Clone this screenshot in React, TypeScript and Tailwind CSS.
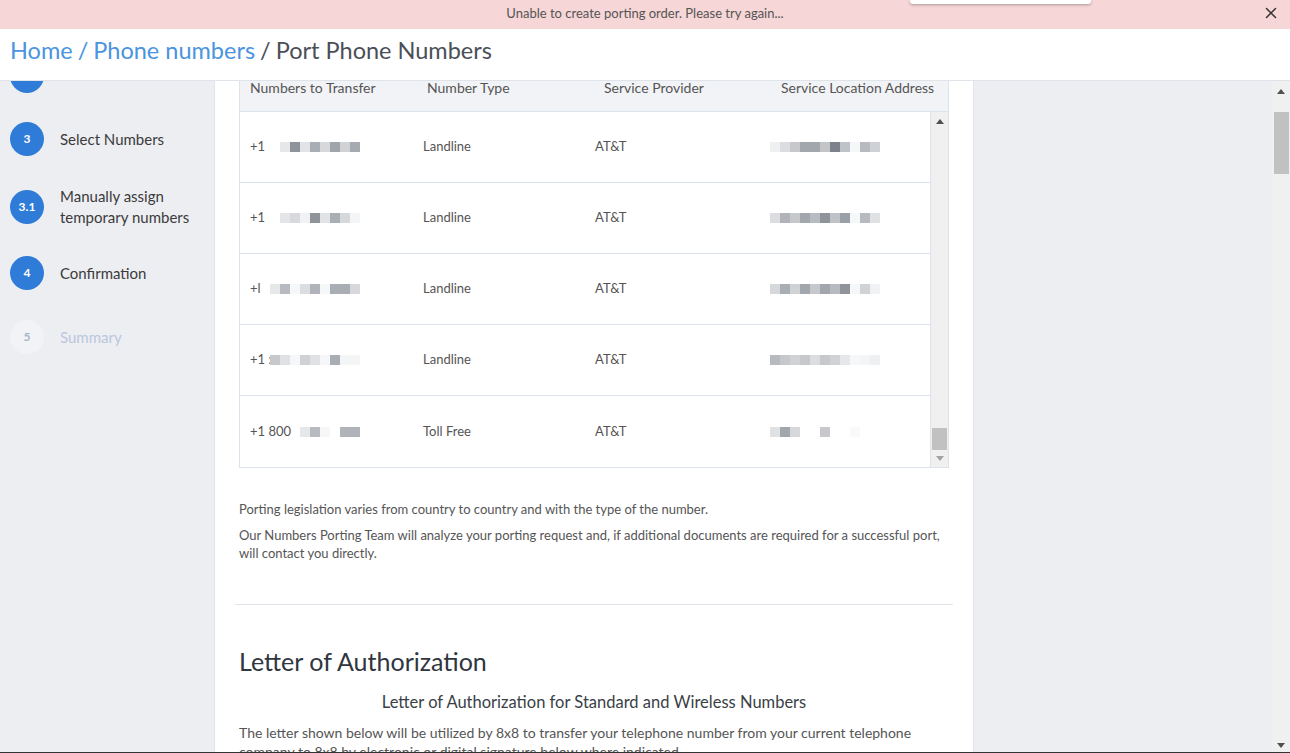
import { X } from "lucide-react";

const font = { fontFamily: "Lato, 'Open Sans', sans-serif" };

type Row = { num: string; numBlocks: string[]; type: string; addr: string[] };

// pixelated (redacted) values, 10px blocks starting at a fixed column
const rows: Row[] = [
  {
    num: "+1",
    numBlocks: ["", "#e6e7e9", "#8f949b", "#e2e3e6", "#a9adb4", "#d6d8db", "#a0a4ab", "#d0d2d5", "#a5a9b0"],
    type: "Landline",
    addr: ["#eef0f2", "#dcdde0", "#c6c8cc", "#a2a6ad", "#a2a6ad", "#c2c4c8", "#7c818a", "#bfc2c6", "#f6f7f8", "#b7babf", "#cfd1d4"],
  },
  {
    num: "+1",
    numBlocks: ["", "#e4e5e8", "#d7d9dc", "#f1f2f3", "#8f949b", "#e2e3e6", "#a9adb4", "#d6d8db", "#f4f5f6"],
    type: "Landline",
    addr: ["#dcdde0", "#b0b4ba", "#c6c8cc", "#a2a6ad", "#b8bbc0", "#8f949b", "#bfc2c6", "#9aa0a8", "#f6f7f8", "#b7babf", "#e0e1e3"],
  },
  {
    num: "+l",
    numBlocks: ["#e6e7e9", "#b7bac0", "#f6f7f8", "#dcdde0", "#b0b4ba", "#f6f7f8", "#a9adb4", "#a9adb4", "#d6d8db"],
    type: "Landline",
    addr: ["#d6d8db", "#a9adb4", "#d0d2d5", "#a2a6ad", "#c6c8cc", "#a2a6ad", "#b7babf", "#8f949b", "#f6f7f8", "#d0d2d5", "#f1f2f3"],
  },
  {
    num: "+1 :",
    numBlocks: ["#c6c8cc", "#e0e1e3", "#f6f7f8", "#cfd1d4", "#e0e1e3", "#f6f7f8", "#a9adb4", "#f4f5f6", "#f4f5f6"],
    type: "Landline",
    addr: ["#b7babf", "#c6c8cc", "#d0d2d5", "#c6c8cc", "#dcdde0", "#c6c8cc", "#d0d2d5", "#e6e7e9", "#f6f7f8", "#f4f5f6", "#eef0f2"],
  },
  {
    num: "+1 800",
    numBlocks: ["", "", "", "#e6e7e9", "#b7babf", "#f6f7f8", "#ffffff", "#b0b4ba", "#b0b4ba"],
    type: "Toll Free",
    addr: ["#e0e1e3", "#a2a6ad", "#d6d8db", "#ffffff", "#ffffff", "#c6c8cc", "#ffffff", "#ffffff", "#fafafa", "#ffffff", "#ffffff"],
  },
];

function Blocks({ colors }: { colors: string[] }) {
  return (
    <span className="inline-flex">
      {colors.map((c, i) => (
        <span key={i} className="block h-[10px] w-[10px]" style={{ background: c || "transparent" }} />
      ))}
    </span>
  );
}

const steps = [
  { n: "3", label: ["Select Numbers"], active: true, h: "h-[68px]" },
  { n: "3.1", label: ["Manually assign", "temporary numbers"], active: true, h: "h-[68px]" },
  { n: "4", label: ["Confirmation"], active: true, h: "h-[64px]" },
  { n: "5", label: ["Summary"], active: false, h: "h-[64px]" },
];

function Arrow({ up, className }: { up: boolean; className?: string }) {
  return (
    <svg width="8" height="5" viewBox="0 0 8 5" className={className}>
      <path d={up ? "M0 5 L4 0 L8 5 Z" : "M0 0 L4 5 L8 0 Z"} fill="currentColor" />
    </svg>
  );
}

export default function App() {
  return (
    <div className="relative flex h-[753px] w-[1290px] flex-col overflow-hidden border-b border-[#333] bg-white" style={font}>
      {/* error banner */}
      <div className="relative z-10 flex h-[29px] shrink-0 items-center justify-center bg-[#f6d6d6] pb-[2px] text-[13px] text-[#555]">
        <span>Unable to create porting order. Please try again...</span>
        <X className="absolute right-[10px] top-[4px] h-[18px] w-[18px] text-[#333]" strokeWidth={2} />
        <div className="absolute left-[910px] top-0 h-[4px] w-[181px] rounded-b-[3px] bg-white shadow-[0_1px_3px_rgba(0,0,0,0.3)]" />
      </div>

      {/* breadcrumb */}
      <div className="relative z-10 flex h-[52px] shrink-0 items-center border-b border-[#dfe3ea] bg-white px-[10px] pb-[7px] text-[23.5px] text-[#4a4f57]">
        <span className="text-[#4a94e0]">Home</span>
        <span className="mx-[5px] text-[#4a94e0]">/</span>
        <span className="text-[#4a94e0]">Phone numbers</span>
        <span className="mx-[5px]">/</span>
        <span>Port Phone Numbers</span>
      </div>

      <div className="flex min-h-0 flex-1">
        {/* sidebar */}
        <aside className="w-[215px] shrink-0 overflow-hidden border-r border-[#e1e4ea] bg-[#edeef2] pl-[10px]">
          <div className="-mt-[22px] h-[34px] w-[34px] rounded-full bg-[#2f7bd8]" />
          <div className="mt-[12px] flex flex-col">
            {steps.map((s) => (
              <div key={s.n} className={`flex items-center ${s.h}`}>
                <div
                  className={
                    s.active
                      ? "flex h-[34px] w-[34px] shrink-0 items-center justify-center rounded-full bg-[#2f7bd8] text-[12px] font-bold text-white"
                      : "flex h-[34px] w-[34px] shrink-0 items-center justify-center rounded-full bg-[#f2f3f6] text-[12px] font-bold text-[#aab6c9]"
                  }
                >
                  {s.n}
                </div>
                <div className={s.active ? "ml-[16px] text-[15px] leading-[21px] text-[#3b3b3b]" : "ml-[16px] text-[15px] leading-[21px] text-[#b9c7de]"}>
                  {s.label.map((l) => (
                    <div key={l}>{l}</div>
                  ))}
                </div>
              </div>
            ))}
          </div>
        </aside>

        {/* main */}
        <main className="w-[758px] shrink-0 px-[24px] text-[#555]">
          <div className="border-x border-[#dde3ec]">
            <div className="grid h-[31px] grid-cols-[177px_177px_177px_1fr] border-b border-[#dde3ec] bg-[#f2f3f6] pl-[10px] text-[14px] leading-[14px] text-[#555]">
              <span>Numbers to Transfer</span>
              <span>Number Type</span>
              <span>Service Provider</span>
              <span>Service Location Address</span>
            </div>
            <div className="flex h-[355px]">
              <div className="flex-1 border-r border-[#dde3ec]">
                {rows.map((r, i) => (
                  <div key={i} className="grid h-[71px] grid-cols-[173px_172px_175px_1fr] items-center border-b border-[#dde3ec] pl-[10px] text-[13px] text-[#555] last:border-b-0">
                    <span className="flex items-center">
                      <span className="w-[20px] whitespace-nowrap">{r.num}</span>
                      <Blocks colors={r.numBlocks} />
                    </span>
                    <span>{r.type}</span>
                    <span>AT&amp;T</span>
                    <span className="flex items-center">
                      <Blocks colors={r.addr} />
                    </span>
                  </div>
                ))}
              </div>
              <div className="flex w-[17px] flex-col items-center bg-[#f0f0f0] py-[6px] text-[#505050]">
                <Arrow up className="mt-[1px]" />
                <div className="mt-auto h-[22px] w-[15px] bg-[#c1c1c1]" />
                <Arrow up={false} className="mt-[6px] text-[#a3a3a3]" />
              </div>
            </div>
            <div className="border-b border-[#dde3ec]" />
          </div>

          <div className="mt-[32px] text-[13px] leading-[18px] text-[#555]">
            <p>Porting legislation varies from country to country and with the type of the number.</p>
            <p className="mt-[8px]">
              Our Numbers Porting Team will analyze your porting request and, if additional documents are required for a successful port, will contact you directly.
            </p>
          </div>

          <div className="-mx-[4px] mt-[42px] border-t border-[#dfe3ea]" />

          <h2 className="mt-[41px] text-[25px] leading-[30px] text-[#2f3640]">Letter of Authorization</h2>
          <h3 className="mt-[16px] text-center text-[16.5px] leading-[20px] text-[#3a3f47]">Letter of Authorization for Standard and Wireless Numbers</h3>
          <p className="mt-[11px] text-[14px] leading-[19px] text-[#555]">
            The letter shown below will be utilized by 8x8 to transfer your telephone number from your current telephone company to 8x8 by electronic or digital signature below where indicated.
          </p>
        </main>

        {/* right gutter */}
        <div className="flex-1 border-l border-[#e1e4ea] bg-[#edeef2]" />

        {/* page scrollbar */}
        <div className="flex w-[18px] shrink-0 flex-col items-center bg-[#f0f0f0] pt-[8px] text-[#505050]">
          <Arrow up />
          <div className="mt-[18px] h-[62px] w-[15px] bg-[#c1c1c1]" />
          <Arrow up={false} className="mt-auto mb-[4px]" />
        </div>
      </div>
    </div>
  );
}
